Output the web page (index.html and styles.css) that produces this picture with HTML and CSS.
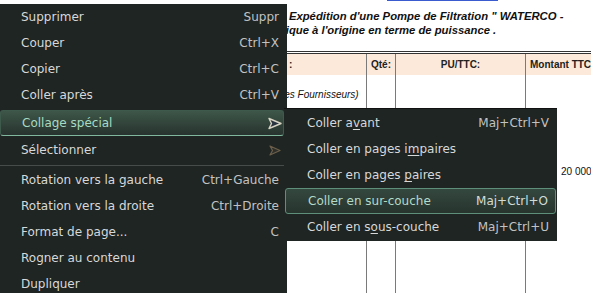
FILE: index.html
```html
<!DOCTYPE html>
<html lang="fr">
<head>
    <meta charset="UTF-8">
    <title>Collage spécial</title>
    <link rel="stylesheet" href="styles.css">
</head>
<body>
    <!-- Document page behind the menus -->
    <div class="doc">
        <div class="link-line"></div>
        <p class="title">t Expédition d'une Pompe de Filtration " WATERCO -<br>fique à l'origine en terme de puissance .</p>
        <table class="devis">
            <tr class="head">
                <td class="c1">:</td>
                <td class="c2">Qté:</td>
                <td class="c3">PU/TTC:</td>
                <td class="c4">Montant TTC</td>
            </tr>
            <tr class="r-note">
                <td class="note">les Fournisseurs)</td>
                <td></td>
                <td></td>
                <td></td>
            </tr>
            <tr class="r-price">
                <td></td>
                <td></td>
                <td></td>
                <td class="amount">20 000</td>
            </tr>
            <tr class="r-rest">
                <td></td>
                <td></td>
                <td></td>
                <td></td>
            </tr>
        </table>
    </div>

    <!-- Main context menu -->
    <div class="menu main-menu">
        <div class="item"><span>Supprimer</span><span class="key">Suppr</span></div>
        <div class="item"><span>Couper</span><span class="key">Ctrl+X</span></div>
        <div class="item"><span>Copier</span><span class="key">Ctrl+C</span></div>
        <div class="item"><span>Coller après</span><span class="key">Ctrl+V</span></div>
        <div class="item active">
            <span>Collage spécial</span>
            <svg class="arrow" width="16" height="13" viewBox="0 0 16 13">
                <polygon points="2,1.5 14,6.5 2,11.5 4.5,6.5" fill="#2a3440" stroke="#d8d4c4" stroke-width="1.4" stroke-linejoin="round"/>
            </svg>
        </div>
        <div class="item">
            <span>Sélectionner</span>
            <svg class="arrow dim" width="16" height="13" viewBox="0 0 16 13">
                <polygon points="3,2 13,6.5 3,11 5.5,6.5" fill="#2e302c" stroke="#6e604a" stroke-width="1.2" stroke-linejoin="round"/>
            </svg>
        </div>
        <div class="sep"></div>
        <div class="item"><span>Rotation vers la gauche</span><span class="key">Ctrl+Gauche</span></div>
        <div class="item"><span>Rotation vers la droite</span><span class="key">Ctrl+Droite</span></div>
        <div class="item"><span>Format de page...</span><span class="key">C</span></div>
        <div class="item"><span>Rogner au contenu</span></div>
        <div class="item"><span>Dupliquer</span></div>
    </div>

    <!-- Submenu of "Collage spécial" -->
    <div class="menu sub-menu">
        <div class="item"><span>Coller a<u>v</u>ant</span><span class="key">Maj+Ctrl+V</span></div>
        <div class="item"><span>Coller en pages i<u>m</u>paires</span></div>
        <div class="item"><span>Coller en pages <u>p</u>aires</span></div>
        <div class="item active"><span>Coller en sur-couche</span><span class="key">Maj+Ctrl+O</span></div>
        <div class="item"><span>Coller en s<u>o</u>us-couche</span><span class="key">Maj+Ctrl+U</span></div>
    </div>
</body>
</html>
```

FILE: styles.css
```css
body {
    margin: 0;
    width: 591px;
    height: 293px;
    overflow: hidden;
    background-color: #fff;
    position: relative;
}

/* Document */
.doc {
    padding-left: 282px;
    height: 293px;
    overflow: hidden;
    font-family: "Liberation Sans", Arial, sans-serif;
    color: #111;
}

.link-line {
    margin-left: 105px;
    width: 111px;
    height: 1px;
    background-color: #3a5bd0;
}

.title {
    margin: 8px 0 0;
    font-size: 11.3px;
    line-height: 14px;
    font-weight: bold;
    font-style: italic;
    white-space: nowrap;
}

.devis {
    margin-top: 14px;
    border-collapse: collapse;
    border-top: 3px double #333;
    table-layout: fixed;
    width: 311px;
}

.devis td {
    padding: 0;
    border-left: 1px solid #7a7a7a;
    font-size: 10px;
    white-space: nowrap;
    overflow: hidden;
}

.devis td:first-child {
    border-left: none;
}

.c1 { width: 77px; }
.c2 { width: 24px; }
.c3 { width: 129px; }
.c4 { width: 66px; }

.head td {
    height: 21px;
    background-color: #fde9d9;
    font-weight: bold;
    color: #222;
}

.head .c1 { padding-left: 7px; }
.head .c2 { padding-left: 4px; }
.head .c3 { text-align: center; }
.head .c4 { padding-left: 4px; }

.r-note td { height: 38px; }

.note {
    font-size: 8px;
    font-style: italic;
    padding-left: 3px;
}

.r-price td { height: 116px; }

.devis .amount {
    padding-left: 35px;
    font-size: 10px;
}

.r-rest td { height: 80px; }

/* Menus */
.menu {
    position: absolute;
    background-color: #1e2523;
    font-family: "DejaVu Sans", sans-serif;
    font-size: 12px;
    color: #d8d8d8;
}

.main-menu {
    left: 0;
    top: 4px;
    width: 287px;
    height: 289px;
    overflow: hidden;
}

.sub-menu {
    left: 284px;
    top: 108px;
    width: 273px;
    padding: 1px 0 2px;
    border-top: 1px solid #111;
    box-sizing: border-box;
    height: 133px;
}

.item {
    display: flex;
    justify-content: space-between;
    align-items: center;
    box-sizing: border-box;
    height: 26px;
    padding: 0 8px 0 21px;
}

.sub-menu .item {
    padding: 0 8px 0 23px;
}

.key {
    color: #c2c2c2;
}

u {
    text-decoration-thickness: 1px;
    text-underline-offset: 2px;
}

.main-menu .item.active {
    margin: 2px 3px 1px 0;
    padding-right: 0;
    border: 1px solid #3e5a4d;
    border-bottom-color: #80b89e;
    border-radius: 3px;
    background: linear-gradient(#3e5649, #27332e);
    color: #a7dbc3;
}

.sub-menu .item.active {
    margin: 0 1px;
    padding-right: 7px;
    padding-left: 22px;
    border: 1px solid #5e8f7a;
    border-radius: 3px;
    background: linear-gradient(#34483f, #27342e);
    color: #b4dac8;
}

.sub-menu .item.active .key {
    color: #d2dcd6;
}

.arrow.dim {
    margin-right: -4px;
}

.sep {
    height: 1px;
    margin: 2px 0 1px;
    background-color: #454c49;
}
```
